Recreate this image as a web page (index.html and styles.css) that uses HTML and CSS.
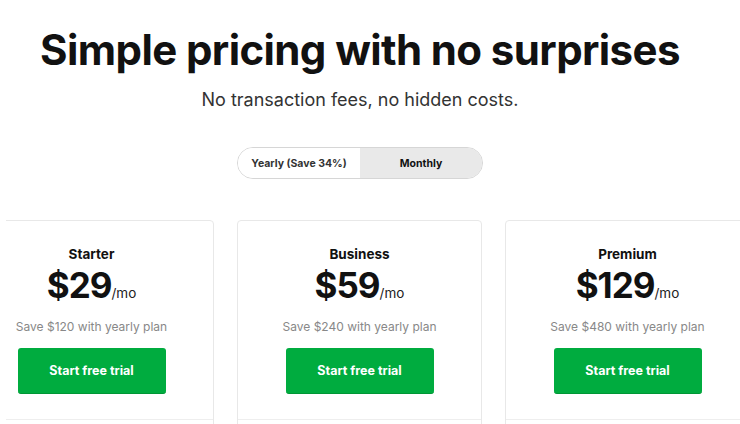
FILE: index.html
```html
<!DOCTYPE html>
<html>
<head>
  <title>Pricing</title>
  <link rel="stylesheet" href="styles.css">
</head>
<body>
  <div class="hero">
    <header class="intro">
      <h1>Simple pricing with no surprises</h1>
      <p>No transaction fees, no hidden costs.</p>
    </header>

    <div class="billing-toggle">
      <button class="toggle-option">Yearly (Save 34%)</button>
      <button class="toggle-option active">Monthly</button>
    </div>
  </div>

  <div class="plans-window">
    <div class="plans">
      <div class="plan">
        <h2>Starter</h2>
        <div class="price"><span class="amount">$29</span><span class="per">/mo</span></div>
        <p class="saving">Save $120 with yearly plan</p>
        <a class="trial-btn">Start free trial</a>
      </div>
      <div class="plan">
        <h2>Business</h2>
        <div class="price"><span class="amount">$59</span><span class="per">/mo</span></div>
        <p class="saving">Save $240 with yearly plan</p>
        <a class="trial-btn">Start free trial</a>
      </div>
      <div class="plan">
        <h2>Premium</h2>
        <div class="price"><span class="amount">$129</span><span class="per">/mo</span></div>
        <p class="saving">Save $480 with yearly plan</p>
        <a class="trial-btn">Start free trial</a>
      </div>
    </div>
  </div>
</body>
</html>
```

FILE: styles.css
```css
body {
  margin: 0;
  background-color: #fff;
  font-family: Inter, Lato, sans-serif;
  color: #111;
  overflow: hidden;
}

.hero {
  width: 720px;
}

.intro {
  text-align: center;
  padding-top: 24px;
}

.intro h1 {
  margin: 0;
  font-size: 42px;
  font-weight: 700;
  line-height: 52px;
  letter-spacing: -0.6px;
  color: #111;
}

.intro p {
  margin: 12px 0 0;
  font-size: 18px;
  line-height: 24px;
  color: #333;
}

.billing-toggle {
  display: flex;
  width: 244px;
  height: 30px;
  margin: 35px auto 0;
  border: 1px solid #d6d6d6;
  border-radius: 16px;
  overflow: hidden;
}

.toggle-option {
  flex: 1;
  border: 0;
  background: #fff;
  font-family: inherit;
  font-size: 10.5px;
  font-weight: 700;
  color: #333;
  padding: 0;
}

.toggle-option.active {
  background: #e9e9e9;
  color: #111;
}

.plans-window {
  margin: 41px 0 0 6px;
  overflow: hidden;
}

.plans {
  display: flex;
  gap: 23px;
  margin-left: -37px;
}

.plan {
  flex: 0 0 245px;
  height: 220px;
  box-sizing: border-box;
  border: 1px solid #e8e8e8;
  border-radius: 4px;
  text-align: center;
  padding-top: 24px;
  position: relative;
}

.plan::after {
  content: "";
  position: absolute;
  left: 0;
  right: 0;
  top: 198px;
  border-top: 1px solid #eee;
}

.plan h2 {
  margin: 0;
  font-size: 13.5px;
  font-weight: 700;
  line-height: 18px;
}

.price {
  margin-top: 2px;
  line-height: 40px;
}

.amount {
  font-size: 35px;
  font-weight: 700;
  letter-spacing: -1px;
}

.per {
  font-size: 13.5px;
  color: #222;
}

.saving {
  margin: 6px 0 0;
  font-size: 12px;
  color: #888;
}

.trial-btn {
  display: block;
  width: 148px;
  height: 46px;
  margin: 14px auto 0;
  box-sizing: border-box;
  background-color: #00ac3f;
  border-bottom: 1px solid #009635;
  border-radius: 3px;
  color: #fff;
  font-size: 12.5px;
  font-weight: 700;
  line-height: 46px;
  text-decoration: none;
}
```
